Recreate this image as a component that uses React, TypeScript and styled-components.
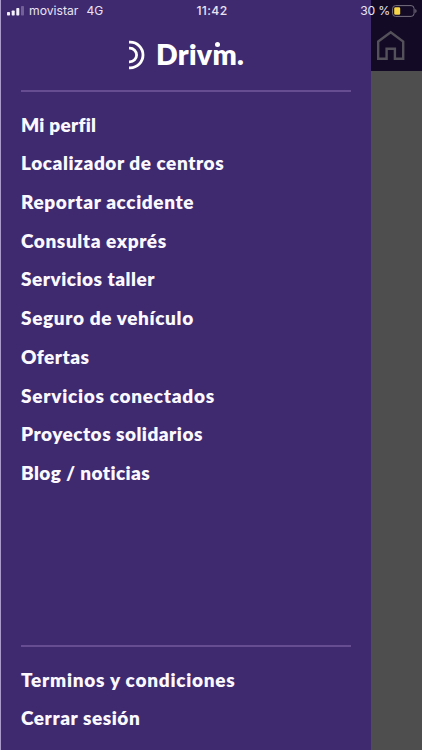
import React from 'react';
import styled, { createGlobalStyle } from 'styled-components';

const GlobalStyle = createGlobalStyle`
  * { box-sizing: border-box; }
  body { margin: 0; background: #4e4e4e; }
`;

const Screen = styled.div`
  position: relative;
  display: grid;
  grid-template-columns: 371px 1fr;
  width: 422px;
  height: 750px;
  overflow: hidden;
  background: #4e4e4e;
`;

const StatusBar = styled.header`
  position: absolute;
  inset: 0 0 auto 0;
  height: 22px;
  display: grid;
  grid-template-columns: 1fr auto 1fr;
  align-items: center;
  padding: 0 5px 0 7px;
  color: #e9e3f3;
  font: 400 12.2px/22px Inter, sans-serif;
`;

const Carrier = styled.div`
  display: flex;
  align-items: center;
  gap: 5px;
  white-space: nowrap;
`;

const Network = styled.span`
  margin-left: 3px;
  font-size: 12px;
`;

const Clock = styled.time`
  font-weight: 500;
  font-size: 12.2px;
  letter-spacing: 0.35px;
`;

const Power = styled.div`
  display: flex;
  align-items: center;
  justify-content: flex-end;
  gap: 2px;
  letter-spacing: -0.2px;
`;

const Drawer = styled.aside`
  display: flex;
  flex-direction: column;
  padding: 0 20px;
  border-left: 1px solid #a99acb;
  background: #3f2a70;
`;

const Brand = styled.div`
  display: flex;
  align-items: flex-start;
  height: 90px;
  padding: 40px 0 0 106px;
  color: #fff;
`;

const Wordmark = styled.span`
  margin-left: 9px;
  font: 800 28.5px/28px Lato, sans-serif;
  letter-spacing: 0.3px;
  white-space: nowrap;
`;

const DottedLetter = styled.span`
  position: relative;
  &::before {
    content: '';
    position: absolute;
    left: 2px;
    top: 5px;
    width: 5px;
    height: 5px;
    border-radius: 50%;
    background: #fff;
  }
`;

const Rule = styled.hr`
  flex: none;
  width: 330px;
  height: 2px;
  margin: 0;
  border: 0;
  background: #664d91;
`;

const Menu = styled.nav<{ $bottom?: boolean }>`
  display: flex;
  flex-direction: column;
  padding-top: 13.5px;
  ${(p) => (p.$bottom ? 'height: 103px;' : 'flex: 1;')}
`;

const MenuItem = styled.a<{ $tracking: number }>`
  height: 38.72px;
  color: #fbf9ff;
  font: 800 19px/38.72px Lato, sans-serif;
  letter-spacing: ${(p) => p.$tracking}px;
  white-space: nowrap;
`;

const Page = styled.main`
  display: flex;
  flex-direction: column;
`;

const PageHeader = styled.div`
  height: 71px;
  padding: 30px 0 0 5px;
  background: #130b25;
`;

const mainItems: [string, number][] = [
  ['Mi perfil', 0.25],
  ['Localizador de centros', 0.55],
  ['Reportar accidente', 0.61],
  ['Consulta exprés', 0.58],
  ['Servicios taller', 0.49],
  ['Seguro de vehículo', 0.63],
  ['Ofertas', 0.45],
  ['Servicios conectados', 0.72],
  ['Proyectos solidarios', 0.48],
  ['Blog / noticias', 0.4],
];

const accountItems: [string, number][] = [
  ['Terminos y condiciones', 0.74],
  ['Cerrar sesión', 0.56],
];

const SignalIcon = () => (
  <svg width="17" height="10" viewBox="0 0 17 10" fill="#f4f0fa">
    <rect x="0" y="6" width="3" height="3.5" rx=".7" />
    <rect x="4.7" y="4.5" width="3" height="5" rx=".7" />
    <rect x="9.3" y="2" width="3" height="7.5" rx=".7" />
    <rect x="14" y="0" width="3" height="9.5" rx=".7" opacity=".28" />
  </svg>
);

const BatteryIcon = () => (
  <svg width="25" height="12" viewBox="0 0 25 12">
    <rect x=".6" y=".6" width="21.5" height="10.8" rx="3" fill="none" stroke="#77707f" />
    <rect x="2.2" y="2.2" width="6" height="7.6" rx="1.3" fill="#f7d64a" />
    <path d="M23.3 4c1.7.6 1.7 3.4 0 4z" fill="#77707f" />
  </svg>
);

const LogoMark = () => (
  <svg width="20" height="30" viewBox="0 0 20 30" fill="none" stroke="#fff" strokeWidth="2.8">
    <path d="M2 2.2h1.2a12.8 12.8 0 0 1 0 25.6H2" />
    <path d="M2 8.2h.8a6.8 6.8 0 0 1 0 13.6H2" />
  </svg>
);

const HomeIcon = () => (
  <svg width="30" height="31" viewBox="0 0 30 31" fill="none" stroke="#55515a" strokeWidth="2.4">
    <path d="M2.2 11.5 14.7 2.3l12.5 9.2v17.2h-8.3v-10h-8.3v10H2.2z" />
  </svg>
);

export default function App() {
  return (
    <>
      <GlobalStyle />
      <Screen>
        <Drawer>
          <Brand>
            <LogoMark />
            <Wordmark>
              Driv<DottedLetter>m</DottedLetter>.
            </Wordmark>
          </Brand>
          <Rule />
          <Menu>
            {mainItems.map(([label, tracking]) => (
              <MenuItem key={label} $tracking={tracking}>{label}</MenuItem>
            ))}
          </Menu>
          <Rule />
          <Menu $bottom>
            {accountItems.map(([label, tracking]) => (
              <MenuItem key={label} $tracking={tracking}>{label}</MenuItem>
            ))}
          </Menu>
        </Drawer>
        <Page>
          <PageHeader>
            <HomeIcon />
          </PageHeader>
        </Page>
        <StatusBar>
          <Carrier>
            <SignalIcon />
            <span>movistar</span>
            <Network>4G</Network>
          </Carrier>
          <Clock>11:42</Clock>
          <Power>
            <span>30 %</span>
            <BatteryIcon />
          </Power>
        </StatusBar>
      </Screen>
    </>
  );
}
